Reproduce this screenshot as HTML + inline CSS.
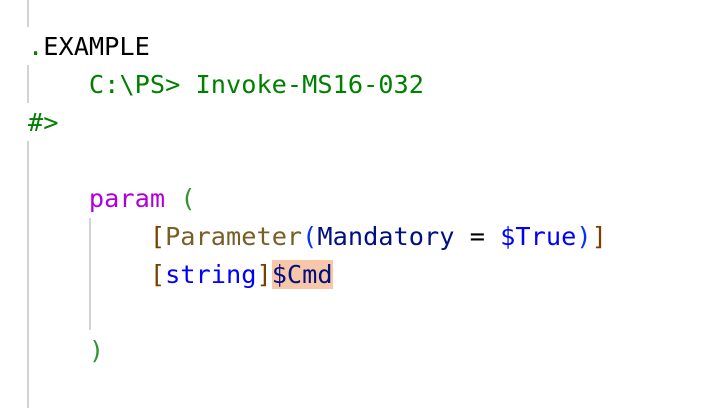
<!DOCTYPE html>
<html><head><meta charset="utf-8"><style>
html,body{margin:0;padding:0;background:#fff;width:722px;height:408px;overflow:hidden;position:relative}
.l{position:absolute;left:28px;height:38px;line-height:38px;font-family:"DejaVu Sans Mono","Liberation Mono",monospace;font-size:25.3px;white-space:pre}
.g{position:absolute;background:#d3d3d3;width:2px}
.gr{color:#008000}.pu{color:#af00db}.br{color:#795e26}.bk{color:#7a3e00}.bl{color:#0000ff}.nv{color:#001080}.pb{color:#0431fa}.pg{color:#319331}
.hl{background:#f8c6a8}
</style></head><body>
<div class="g" style="left:27px;top:0;height:27px"></div>
<div class="g" style="left:27px;top:65px;height:38px"></div>
<div class="g" style="left:27px;top:141px;height:267px"></div>
<div class="g" style="left:89px;top:218px;height:112px"></div>
<div class="l" style="top:28px"><span class="gr">.</span>EXAMPLE</div>
<div class="l gr" style="top:66px">    C:\PS&gt; Invoke-MS16-032</div>
<div class="l gr" style="top:104px">#&gt;</div>
<div class="l" style="top:180px">    <span class="pu">param</span> <span class="pg">(</span></div>
<div class="l" style="top:218px">        <span class="bk">[</span><span class="br">Parameter</span><span class="pb">(</span><span class="nv">Mandatory</span> = <span class="bl">$True</span><span class="pb">)</span><span class="bk">]</span></div>
<div class="l" style="top:256px">        <span class="bk">[</span><span class="bl">string</span><span class="bk">]</span><span class="nv hl">$Cmd</span></div>
<div class="l" style="top:332px">    <span class="pg">)</span></div>
</body></html>
